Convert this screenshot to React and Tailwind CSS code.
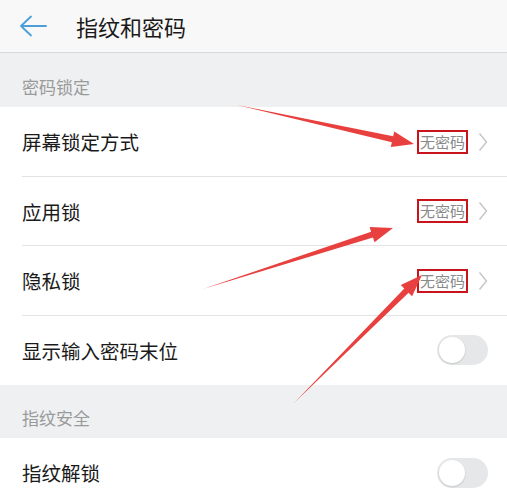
import React from "react";

function Chevron() {
  return (
    <svg width="10" height="20" viewBox="0 0 10 20" className="ml-[10px]">
      <path d="M1.5 1.5 L8.5 10 L1.5 18.5" fill="none" stroke="#c4c4c4" strokeWidth="1.4" />
    </svg>
  );
}

function Toggle() {
  return (
    <div className="w-[51px] h-[30px] rounded-full bg-[#e6e7e8] flex items-center px-[2px]">
      <div className="w-[26px] h-[26px] rounded-full bg-white shadow-[0_1px_2px_rgba(0,0,0,0.15)]" />
    </div>
  );
}

function NavRow({ label, last }) {
  return (
    <div className="h-[69.5px] flex items-center pl-[22px] pr-[19px] relative bg-white">
      <span className="text-[19.5px] text-[#1a1a1a] flex-1">{label}</span>
      <span className="text-[15px] text-[#8a8a8a] border-[2.5px] border-[#c9141c] px-[1px] leading-[18px] h-[24px] flex items-center">无密码</span>
      <Chevron />
      {!last && <div className="absolute left-[22px] right-0 bottom-0 h-px bg-[#e3e3e3]" />}
    </div>
  );
}

function ToggleRow({ label }) {
  return (
    <div className="h-[69.5px] flex items-center pl-[22px] pr-[19px] bg-white">
      <span className="text-[19.5px] text-[#1a1a1a] flex-1">{label}</span>
      <Toggle />
    </div>
  );
}

function Section({ title, tall }) {
  return (
    <div className={`${tall ? "h-[54px]" : "h-[53px]"} bg-[#eef0f2] flex items-end pl-[22px] pb-[8px]`}>
      <span className="text-[17px] text-[#9a9a9a]">{title}</span>
    </div>
  );
}

function Arrow({ x1, y1, x2, y2 }) {
  const dx = x2 - x1, dy = y2 - y1;
  const len = Math.hypot(dx, dy);
  const ux = dx / len, uy = dy / len;
  const px = -uy, py = ux;
  const headLen = 22, headW = 8, shaftW = 3;
  const bx = x2 - ux * headLen, by = y2 - uy * headLen;
  const pts = [
    [x1, y1],
    [bx + px * shaftW, by + py * shaftW],
    [bx + px * headW, by + py * headW],
    [x2, y2],
    [bx - px * headW, by - py * headW],
    [bx - px * shaftW, by - py * shaftW],
  ];
  return <polygon points={pts.map((p) => p.join(",")).join(" ")} fill="#e8403e" />;
}

export default function App() {
  return (
    <div className="w-[507px] h-[500px] overflow-hidden relative bg-white" style={{ fontFamily: '"Noto Sans CJK SC", "Noto Sans", sans-serif' }}>
      <div className="h-[53px] bg-[#f8f8f8] border-b border-[#d9d9d9] flex items-center">
        <svg width="28" height="22" viewBox="0 0 28 22" className="ml-[19px]">
          <path d="M12 1.5 L2 11 L12 20.5 M2 11 H27" fill="none" stroke="#4a9fd8" strokeWidth="1.8" strokeLinecap="round" strokeLinejoin="round" />
        </svg>
        <span className="ml-[29px] text-[22px] text-[#1a1a1a]">指纹和密码</span>
      </div>
      <Section title="密码锁定" tall />
      <NavRow label="屏幕锁定方式" />
      <NavRow label="应用锁" />
      <NavRow label="隐私锁" />
      <ToggleRow label="显示输入密码末位" />
      <Section title="指纹安全" />
      <ToggleRow label="指纹解锁" />
      <svg className="absolute left-0 top-0 pointer-events-none" width="507" height="500">
        <Arrow x1={237} y1={105} x2={414} y2={144} />
        <Arrow x1={203} y1={289} x2={393} y2={228} />
        <Arrow x1={294} y1={403} x2={422} y2={275} />
      </svg>
    </div>
  );
}
